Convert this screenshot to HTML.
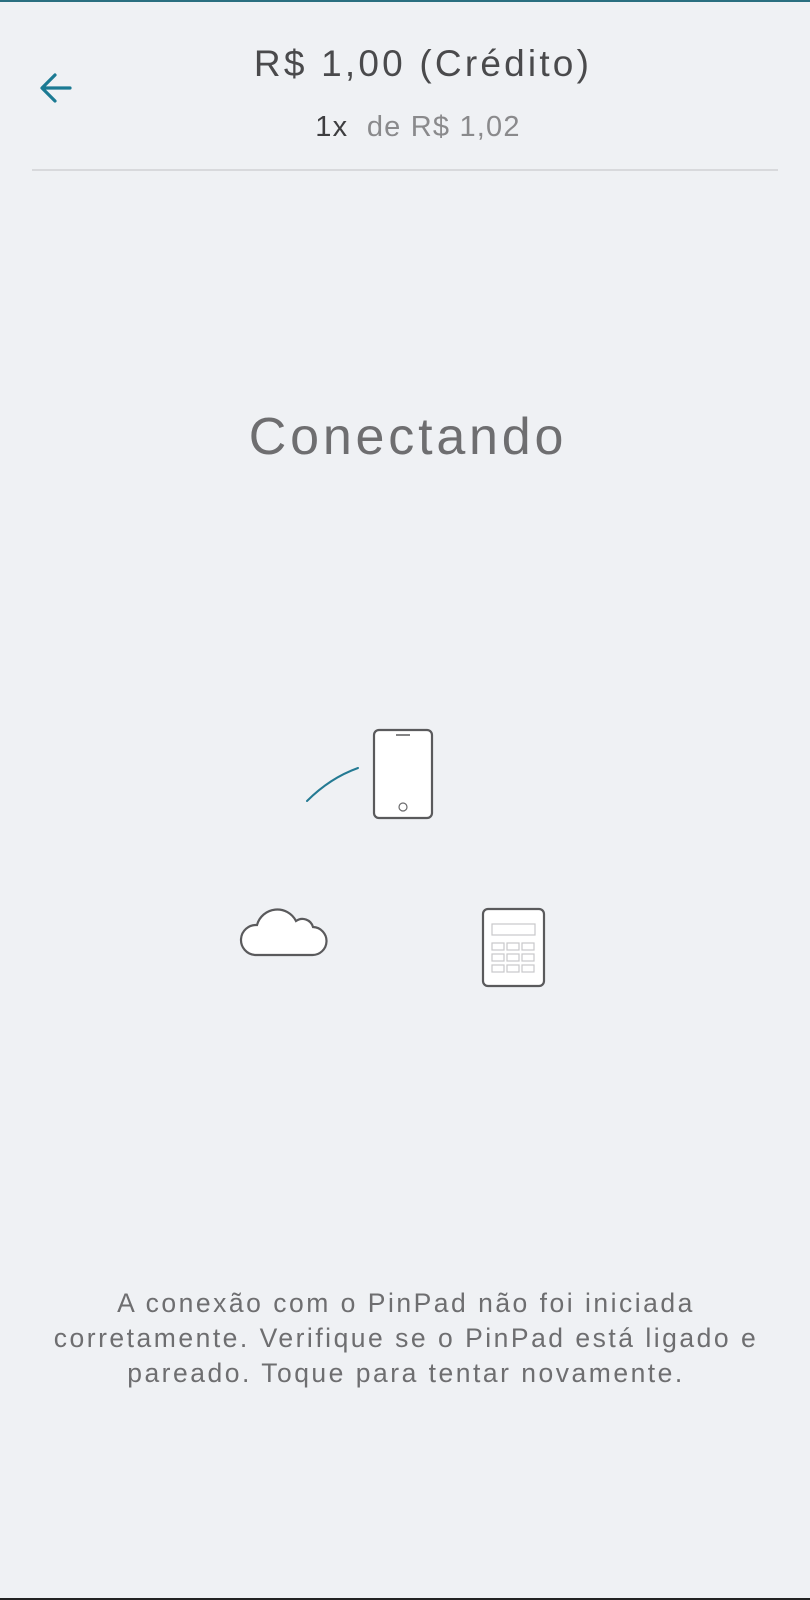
<!DOCTYPE html>
<html><head><meta charset="utf-8"><style>
html,body{margin:0;padding:0}
body{width:810px;height:1600px;background:#eff1f4;position:relative;overflow:hidden;font-family:"Liberation Sans",sans-serif}
.t{position:absolute;left:0;width:810px;text-align:center;white-space:nowrap}
</style></head><body>
<div style="position:absolute;left:0;top:0;width:810px;height:2px;background:#2a6f80"></div>
<svg style="position:absolute;left:36px;top:70px" width="40" height="36" viewBox="0 0 40 36">
<path d="M34 18H7M19 5L6 18l13 13" fill="none" stroke="#1b7a93" stroke-width="3.2" stroke-linecap="round" stroke-linejoin="round"/></svg>
<div class="t" style="top:43px;font-size:37px;color:#4a4a4c;left:18px;letter-spacing:3.2px">R$ 1,00 (Crédito)</div>
<div class="t" style="top:111px;font-size:29px;left:13px;letter-spacing:1.2px"><span style="color:#3e3e40">1x</span>&nbsp; <span style="color:#8a8a8c">de R$ 1,02</span></div>
<div style="position:absolute;left:32px;top:169px;width:746px;height:2px;background:#d8d9dc"></div>
<div class="t" style="top:407px;font-size:52px;color:#6e6e70;left:3px;letter-spacing:3.8px">Conectando</div>
<svg style="position:absolute;left:0;top:700px" width="810" height="300" viewBox="0 700 810 300">
<path d="M307 801Q330 778 358 768" fill="none" stroke="#247a93" stroke-width="2" stroke-linecap="round"/>
<rect x="374" y="730" width="58" height="88" rx="5" fill="#fff" stroke="#5a5a5c" stroke-width="2.2"/>
<line x1="396" y1="735" x2="410" y2="735" stroke="#5a5a5c" stroke-width="1.5"/>
<circle cx="403" cy="807" r="4" fill="none" stroke="#6a6a6c" stroke-width="1.2"/>
<path d="M255 955h57a14 14 0 0 0 1-28a11 11 0 0 0-17-6a21 21 0 0 0-39 4a15 15 0 0 0-2 30z" fill="#fff" stroke="#5a5a5c" stroke-width="2.2"/>
<rect x="483" y="909" width="61" height="77" rx="5" fill="#fff" stroke="#5a5a5c" stroke-width="2.2"/>
<rect x="492" y="924" width="43" height="11" fill="none" stroke="#c8c8ca" stroke-width="1.2"/>
<g fill="none" stroke="#c8c8ca" stroke-width="1.2">
<rect x="492" y="943" width="12" height="7"/><rect x="507" y="943" width="12" height="7"/><rect x="522" y="943" width="12" height="7"/>
<rect x="492" y="954" width="12" height="7"/><rect x="507" y="954" width="12" height="7"/><rect x="522" y="954" width="12" height="7"/>
<rect x="492" y="965" width="12" height="7"/><rect x="507" y="965" width="12" height="7"/><rect x="522" y="965" width="12" height="7"/>
</g></svg>
<div class="t" style="top:1286px;font-size:26.5px;line-height:35px;color:#6e6e70;letter-spacing:2.5px;left:1px">A conexão com o PinPad não foi iniciada<br>corretamente. Verifique se o PinPad está ligado e<br>pareado. Toque para tentar novamente.</div>
<div style="position:absolute;left:0;top:1598px;width:810px;height:2px;background:#222"></div>
</body></html>
